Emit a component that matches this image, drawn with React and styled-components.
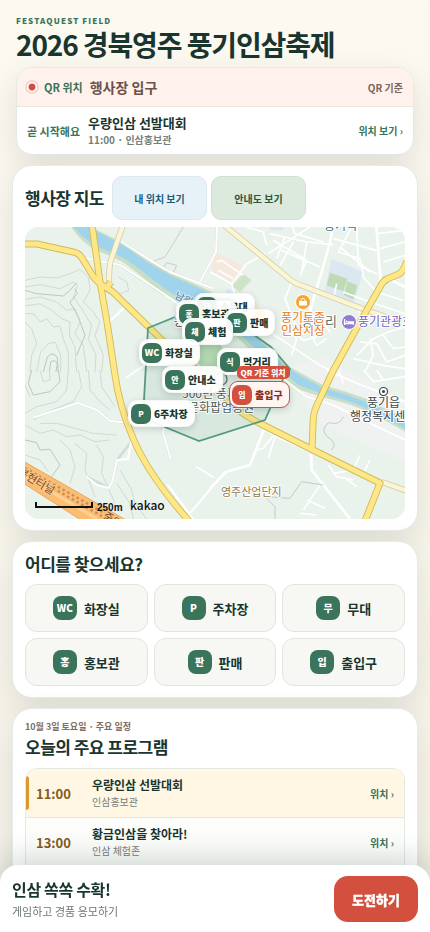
import React from "react";
import styled, { createGlobalStyle } from "styled-components";

const GlobalStyle = createGlobalStyle`
  * {
    box-sizing: border-box;
  }

  body {
    margin: 0;
    background: #fbf8ee;
    color: #18352f;
    font-family: "Noto Sans CJK KR", "Noto Sans", sans-serif;
  }

  button,
  a {
    font-family: inherit;
    color: inherit;
    text-decoration: none;
    cursor: pointer;
  }
`;

const Page = styled.div`
  min-height: 100vh;
  padding: 14px 12px 88px;
  background: linear-gradient(180deg, #fcf9f0 0%, #f6f2e8 100%);
`;

const Header = styled.header`
  padding: 0 4px;
`;

const Brand = styled.p`
  margin: 0;
  font-size: 8px;
  line-height: 14px;
  font-weight: 800;
  letter-spacing: 0.14em;
  color: #39745b;
`;

const Title = styled.h1`
  margin: 0;
  font-size: 28px;
  line-height: 33px;
  font-weight: 700;
  letter-spacing: -0.04em;
`;

const ContextCard = styled.section`
  margin: 6px 4px 10px;
  border: 1px solid #e4e9e4;
  border-radius: 16px;
  background: #fff;
  box-shadow: 0 12px 32px rgba(31, 52, 42, 0.12);
  overflow: hidden;
`;

const LocationRow = styled.div`
  display: flex;
  align-items: center;
  gap: 5px;
  height: 39px;
  padding: 0 10px 0 8px;
  background: #fff2ec;
  border-bottom: 1px solid #e8e8e3;
`;

const Dot = styled.span`
  width: 14px;
  height: 14px;
  border: 2px solid #f8d6ce;
  border-radius: 50%;
  background: radial-gradient(circle, #d3503e 3px, #fff 4px);
`;

const Tag = styled.span`
  font-size: 11px;
  font-weight: 700;
  color: #39745b;
  white-space: nowrap;
`;

const Place = styled.strong`
  flex: 1;
  margin-left: 2px;
  font-size: 14px;
  font-weight: 700;
  color: #6b5149;
`;

const Basis = styled.span`
  font-size: 10px;
  font-weight: 700;
  color: #7c655c;
`;

const NextRow = styled.div`
  display: flex;
  align-items: center;
  gap: 8px;
  height: 47px;
  padding: 0 10px;
`;

const EventText = styled.div`
  flex: 1;
  min-width: 0;
`;

const EventTitle = styled.strong`
  display: block;
  font-size: ${({ $size }) => $size || 12}px;
  line-height: 18px;
  font-weight: 700;
`;

const EventPlace = styled.span`
  display: block;
  font-size: 10px;
  line-height: 16px;
  font-weight: ${({ $bold }) => ($bold ? 700 : 400)};
  color: #76807b;
`;

const PlaceLink = styled.a`
  font-size: 10px;
  font-weight: 700;
  color: #39745b;
  white-space: nowrap;
`;

const Card = styled.section`
  margin-bottom: 10px;
  padding: 10px 12px 11px;
  border: 1px solid #e6eae8;
  border-radius: 20px;
  background: #fff;
  box-shadow: 0 12px 32px rgba(31, 52, 42, 0.12);
`;

const CardTitle = styled.h2`
  margin: 0;
  font-size: 17px;
  line-height: 24px;
  font-weight: 700;
  letter-spacing: -0.03em;
`;

const MapHead = styled.div`
  display: flex;
  align-items: center;
  gap: 4px;
  margin-bottom: 7px;

  ${CardTitle} {
    margin-right: 4px;
  }
`;

const MapButton = styled.button`
  width: 95px;
  height: 44px;
  padding: 0;
  border: 1px solid ${({ $blue }) => ($blue ? "#dce9ef" : "#d0e1d2")};
  border-radius: 10px;
  background: ${({ $blue }) => ($blue ? "#e7f2f8" : "#dceadd")};
  color: ${({ $blue }) => ($blue ? "#1e5c7a" : "#28573d")};
  font-size: 10px;
  font-weight: 700;
`;

const MapBox = styled.div`
  position: relative;
  aspect-ratio: 380 / 292;
  border-radius: 14px;
  background: #eaf2ec;
  overflow: hidden;
`;

const MapDrawing = styled.svg`
  display: block;
  width: 100%;
  height: 100%;
`;

const Pin = styled.button`
  position: absolute;
  display: flex;
  align-items: center;
  gap: 3px;
  height: 27px;
  padding: 0 6px 0 2px;
  border: 1px solid ${({ $active }) => ($active ? "#d3503e" : "#f4f7f5")};
  border-radius: 9px;
  background: ${({ $active }) => ($active ? "#fff5f1" : "rgba(255, 255, 255, 0.93)")};
  color: ${({ $active }) => ($active ? "#8b2e25" : "#18352f")};
  box-shadow: 0 2px 7px rgba(24, 53, 47, 0.2);
  font-size: 10px;
  font-weight: 900;
  white-space: nowrap;
`;

const PinMark = styled.span`
  display: grid;
  place-items: center;
  width: 20px;
  height: 20px;
  border-radius: 7px;
  background: ${({ $active }) => ($active ? "#d3503e" : "#39745b")};
  color: #fff;
  font-size: ${({ $wide }) => ($wide ? 9 : 8)}px;
  line-height: 12px;
  font-weight: 900;
`;

const PinBadge = styled.span`
  position: absolute;
  right: -1px;
  bottom: 28px;
  padding: 0 4px;
  border-radius: 5px;
  background: #d3503e;
  color: #fff;
  font-size: 8px;
  line-height: 13px;
  font-weight: 900;
`;

const FacilityGrid = styled.div`
  display: grid;
  grid-template-columns: repeat(3, 1fr);
  gap: 6px;
  margin-top: 8px;
`;

const FacilityButton = styled.button`
  display: flex;
  align-items: center;
  justify-content: center;
  gap: 7px;
  height: 48px;
  padding: 0;
  border: 1px solid #dfe6df;
  border-radius: 12px;
  background: #f7f8f4;
  font-size: 13px;
  font-weight: 700;
`;

const FacilityMark = styled.span`
  display: grid;
  place-items: center;
  width: 24px;
  height: 24px;
  border-radius: 8px;
  background: #39745b;
  color: #fff;
  font-size: 10px;
  line-height: 14px;
  font-weight: 900;
`;

const ProgramDate = styled.p`
  margin: 0;
  font-size: 9px;
  line-height: 16px;
  font-weight: 700;
  color: #806d62;
`;

const ProgramList = styled.ul`
  margin: 9px 0 0;
  padding: 0 0 12px;
  border: 1px solid #e2e8e2;
  border-radius: 12px;
  background: #fdfefb;
  list-style: none;
  overflow: hidden;
`;

const ProgramItem = styled.li`
  display: flex;
  align-items: center;
  height: 49px;
  padding-right: 10px;
  background: ${({ $now }) => ($now ? "#fff6e3" : "#fdfefb")};
  border-bottom: 1px solid #e2e8e2;

  &::before {
    content: "";
    width: 3px;
    height: 34px;
    margin-right: 7px;
    border-radius: 0 3px 3px 0;
    background: ${({ $now }) => ($now ? "#d99a2b" : "transparent")};
  }
`;

const Time = styled.time`
  width: 56px;
  font-size: 13px;
  font-weight: 700;
  color: #85591c;
`;

const BottomBar = styled.aside`
  position: fixed;
  left: 0;
  right: 0;
  bottom: 0;
  display: flex;
  align-items: center;
  justify-content: space-between;
  padding: 11px 12px 10px;
  border-radius: 18px 18px 0 0;
  background: #fff;
  box-shadow: 0 -8px 28px rgba(24, 53, 47, 0.18);
`;

const BarTitle = styled.strong`
  display: block;
  font-size: 16px;
  line-height: 24px;
  font-weight: 700;
  letter-spacing: -0.02em;
`;

const BarText = styled.span`
  display: block;
  font-size: 11px;
  line-height: 20px;
  color: #6d7773;
`;

const PlayButton = styled.button`
  width: 84px;
  height: 46px;
  border: 0;
  border-radius: 14px;
  background: #d3503e;
  && {
    color: #fff;
  }
  font-size: 13px;
  font-weight: 900;
  -webkit-text-stroke: 0.3px #fff;
`;

// x, y are positions on the 380 x 292 map
const pins = [
  { mark: "무", label: "소무대", x: 169, y: 66 },
  { mark: "홍", label: "홍보관", x: 151, y: 73 },
  { mark: "판", label: "판매", x: 199, y: 82 },
  { mark: "체", label: "체험", x: 157, y: 91 },
  { mark: "WC", label: "화장실", x: 114, y: 112 },
  { mark: "식", label: "먹거리", x: 192, y: 121 },
  { mark: "안", label: "안내소", x: 137, y: 139 },
  { mark: "입", label: "출입구", x: 204, y: 154, active: true },
  { mark: "P", label: "6주차장", x: 103, y: 173 },
];

const facilities = [
  { mark: "WC", label: "화장실" },
  { mark: "P", label: "주차장" },
  { mark: "무", label: "무대" },
  { mark: "홍", label: "홍보관" },
  { mark: "판", label: "판매" },
  { mark: "입", label: "출입구" },
];

const programs = [
  { time: "11:00", title: "우량인삼 선발대회", place: "인삼홍보관", now: true },
  { time: "13:00", title: "황금인삼을 찾아라!", place: "인삼 체험존" },
];

const MAIN_ROADS = [
  "M67 -2 L75 55 L82 95 L90 148 Q94 178 108 211 Q122 246 164 294",
  "M-2 17 L12 17 L48 25 Q54 26 57 31 L68 49 Q72 55 80 60 Q88 64 94 71 L142 118 L178 148 L212 182 Q222 190 238 198 L288 223 L355 256 L340 294",
  "M382 34 Q378 45 374 47 L362 52 Q358 54 355 60 L335 95 L308 144 L292 178 Q288 186 288 198 L287 222",
  "M83 59 L86 55",
];

const PALE_ROADS = [
  "M98 -2 L86 33 Q84 38 84 57",
  "M199 -2 L262 50 Q268 56 278 59 L338 82 L382 97",
  "M357 255 L382 264",
];

function FestivalMap() {
  return (
    <MapDrawing viewBox="0 0 380 292" preserveAspectRatio="xMidYMid slice" aria-hidden="true">
      <rect width="380" height="292" fill="#eaf2ec" />
      <path d="M258 143 L300 130 L380 175 V235 L300 200Z" fill="#f0f2f1" />

      {/* contour lines */}
      <g transform="translate(-5 -5) scale(.33333)" fill="none" stroke="#cfdad0" strokeWidth="3">
        <path d="M15 175 L60 165 L110 168 L150 155 L180 142 L205 165 L210 205 L190 240 L220 270 L240 300 L225 340 L250 400 L245 450" />
        <path d="M15 195 L60 188 L120 200 L160 180 L172 190 L160 225 L185 260 L215 310 L205 350 L228 400 L225 450" />
        <path d="M15 205 L50 215 L130 222 L150 205 L170 182" stroke="#b9c8bc" />
        <path d="M15 232 L60 225 L110 240 L140 265 L165 260 L180 300 L165 335 L190 370 L200 450" />
        <path d="M15 252 L60 245 L95 265 L125 290 L150 300 L148 340 L165 375 L170 450" />
        <path d="M15 275 L40 275 L62 300 L80 290 L100 315 L120 312 L130 350 L145 390 L145 450" />
        <path d="M15 300 L35 320 L50 365 L35 400 L30 450 M50 450 L62 390 L85 365 L105 360 L122 400 L122 450" />
        <path d="M70 450 L82 405 Q100 385 112 408 L115 450 M88 450 L92 420 Q104 410 112 425 L108 450" stroke="#b9c8bc" />
        <path d="M165 200 L172 215 L150 240 L175 285 L195 340 L170 400" stroke="#b9c8bc" />
        <path d="M490 15 L460 65 L435 105 L400 118 M425 145 L440 122 L470 130 L460 152 L425 145" stroke="#c9cfcc" />
        <path d="M295 165 L320 180 L326 205 L290 220" />
      </g>
      <g transform="translate(-5 143) scale(.33333)" fill="none" stroke="#cfdad0" strokeWidth="3">
        <path d="M35 0 L25 40 L40 75 L90 65 L120 35 L115 0" stroke="#b9c8bc" />
        <path d="M60 0 L70 35 L90 30 L88 0 M145 0 L140 60 L110 95 L50 110 L15 130" />
        <path d="M175 0 L185 50 L160 95 L100 118 L40 150 M205 0 L210 60 L240 95 L270 120" />
        <path d="M15 165 L60 190 L100 180 L140 200 L180 195 L225 215 L270 210" />
        <path d="M15 210 L50 218 L60 240 L90 238 L120 285 L95 320" stroke="#b9c8bc" />
        <path d="M60 160 L110 160 L165 175 L220 190 L290 195 M15 255 L60 270 L85 305" />
        <path d="M120 210 L150 240 L165 290 L150 340 M165 220 L200 250 L195 300 L225 380" />
        <path d="M230 225 L250 260 L245 310 L285 400 M300 300 L335 360 L345 400 L380 447" />
        <path d="M240 0 L245 50 L285 110 M15 45 L30 80 M290 340 L330 400 L340 447" />
      </g>

      {/* river */}
      <path d="M45 -2 Q58 19 78 26 Q96 32 111 45 Q138 68 160 80 Q198 94 222 120 Q245 139 272 162 Q296 170 316 175 Q340 181 382 206 L382 192 Q352 178 342 172 Q320 164 298 158 Q275 146 258 136 L230 106 Q204 73 179 61 L145 46 L122 33 L105 21 L94 14 L62 -2Z" fill="#c9dfc5" />
      <path d="M47 -2 Q61 16 80 23 Q98 29 113 41 Q140 63 162 76 Q198 90 225 117 Q248 136 273 158 Q296 167 316 172 Q340 178 382 203 L382 194 Q352 181 342 175 Q320 167 298 161 Q275 149 257 137 L229 107 Q203 75 178 63 L145 48 L122 35 L105 23 L94 16 L62 -1Z" fill="#a0d4ec" />
      <path d="M160 117 L190 110 L202 128 L196 150 L180 146Z" fill="#bedfb9" />

      {/* blocks */}
      <g transform="translate(185 -5) scale(.33333)">
        <path d="M15 90 L100 130 L65 185 L5 145Z" fill="#f4e9dc" />
        <path d="M100 155 L125 175 L90 210 L65 192Z" fill="#cfe3c8" />
        <path d="M50 200 L88 215 L70 245 L45 235Z M365 110 L460 150 L430 250 L345 205Z M180 0 H220 V25 H180Z" fill="#dbe8f1" />
        <path d="M360 152 L412 170 L400 208 L350 190Z M412 178 L442 190 L430 232 L402 220Z" fill="#bedbb4" />
      </g>

      {/* side streets */}
      <g fill="none" stroke="#d4dad6" strokeWidth="2.6" strokeLinejoin="round">
        <path d="M94 13 Q124 33 145 45 L187 61 M60 31 L95 38 L140 68 M175 55 L191 25 L192 0" />
        <path d="M10 190 L53 176 L72 183 L85 194 L106 196 M106 215 L92 233 L87 255 L84 261 L62 250 M134 180 L138 205 L145 230" />
      </g>
      <g fill="none" stroke="#fff" strokeWidth="2" strokeLinejoin="round" strokeLinecap="round">
        <path d="M94 13 Q124 33 145 45 L187 61 M60 31 L95 38 L112 49 L160 81 M175 55 L191 25 L192 0 M84 95 L98 82" />
        <path d="M10 190 L53 176 L72 183 L85 194 L106 196 M106 215 L103 232 L92 233 L87 255 L84 261 L72 258 L62 250 M134 180 L139 195 L138 205 L145 230 M102 150 L120 138" />
        <path d="M112 220 L130 255 L153 280 L163 292 M143 258 L168 292 M172 240 L188 250 M160 292 L200 245" />
      </g>
      <g transform="translate(185 -5) scale(.33333)" fill="none" stroke="#fff" strokeWidth="5" strokeLinejoin="round">
        <path d="M372 0 L360 60 L338 140 L315 215 L285 320 M498 0 L512 178 M585 195 L535 170" strokeWidth="8" />
        <path d="M245 180 L225 230 L260 320 M440 0 L445 130 L500 155" />
        <path d="M180 35 L290 60 L370 68 M175 95 L260 40 L300 15 M190 55 L290 115 L270 160 M210 130 L250 60 M225 45 L200 110 M290 60 L275 150 M215 85 L330 135" />
        <path d="M0 150 L65 185 L110 125 L165 95 M65 185 L80 240 L130 300 M20 120 L35 115 L100 160 M25 145 L70 170 M110 15 L160 30 L170 70 M240 0 L255 35 L340 60" />
        <path d="M370 50 L500 85 M390 75 L480 150 M425 15 L385 90 L450 110 L460 160 M510 80 L585 60 M500 35 L585 25 M520 120 L585 100" />
        <path d="M400 210 L480 240 L585 275 M380 185 L370 230 M430 240 L460 290 M455 160 L500 210 L580 235" />
        <path d="M130 300 L210 350 L330 430 L370 450 M245 330 L260 350 L245 400 M300 330 L320 370 L350 350 M330 285 L360 330 M210 300 L280 355 L320 345" />
        <path d="M585 315 L535 330 L490 350 L440 400 M450 360 L500 365 L530 420 L585 400 M480 350 L490 400 L465 450 M520 340 L550 380 L585 375 M430 410 L520 430 L585 440" />
      </g>
      <g transform="translate(185 143) scale(.33333)" fill="none" stroke="#fff" strokeWidth="5" strokeLinejoin="round">
        <path d="M220 25 L290 80 L370 105 L480 160 L585 210 M350 0 L440 40 L585 95 M385 0 L400 40 M460 0 L490 35 L585 20 M500 0 L520 30" />
        <path d="M165 170 L120 285 L50 305 L0 355 M303 250 L305 300 L360 370 L420 447" strokeWidth="8" />
        <path d="M195 190 L160 235 L140 240 M195 200 L175 265 M160 175 L200 200 L300 245" />
        <path d="M355 285 L380 320 L430 330 M450 255 L430 300 L370 310 M480 270 L460 310 M400 320 L440 350 M330 345 L280 420 M290 390 L345 415 M270 430 L320 435" />
      </g>
      <g transform="translate(185 143) scale(.33333)" fill="none" stroke="#c3cbc6" strokeWidth="3">
        <path d="M365 240 Q385 220 352 200 Q330 180 355 158 Q390 168 400 140 M170 380 L240 385 L275 335 L340 345 M170 385 L195 410 L195 447" />
      </g>

      {/* expressway */}
      <path d="M-2 234 L101 293 L56 293 L-2 256Z" fill="#fbbd72" stroke="#e8a85e" />
      <g fill="none" stroke="#c98d55" strokeWidth="2.4" strokeDasharray="2.4 3">
        <path d="M0 241 L88 291" />
        <path d="M0 245 L80 291" />
      </g>
      <path d="M0 249 L72 292" fill="none" stroke="#ffd093" strokeWidth="3" />

      {/* main roads */}
      <g fill="none" strokeLinejoin="round">
        {PALE_ROADS.map((d) => (
          <path key={d} d={d} stroke="#d3cdab" strokeWidth="6" />
        ))}
        {PALE_ROADS.map((d) => (
          <path key={d} d={d} stroke="#fbf5d3" strokeWidth="4.4" />
        ))}
        {MAIN_ROADS.map((d) => (
          <path key={d} d={d} stroke="#cfbb58" strokeWidth="7" />
        ))}
        {MAIN_ROADS.map((d) => (
          <path key={d} d={d} stroke="#ffe788" strokeWidth="5.2" />
        ))}
      </g>

      {/* festival area */}
      <path
        d="M123 101 L170 82 L215 98 L246 120 L265 142 L258 152 L240 193 L174 214 L118 191Z"
        fill="rgba(57, 135, 105, .09)"
        stroke="#539b80"
        strokeWidth="1.8"
      />

      <g
        fontFamily="'Noto Sans CJK KR', sans-serif"
        fontSize="12"
        paintOrder="stroke"
        stroke="#fff"
        strokeWidth="2"
        strokeLinejoin="round"
      >
        <text x="299" y="3" fill="#45707f">풍기역</text>
        <text x="276" y="99" fontSize="13" fill="#606a6c">성내리</text>
        <text x="256" y="95" fill="#e27c18">풍기토종</text>
        <text x="256" y="108" fill="#e27c18">인삼시장</text>
        <text x="333" y="99" fill="#7360bd">풍기관광호텔</text>
        <text x="342" y="180" fill="#3d4448">풍기읍</text>
        <text x="325" y="194" fill="#3d4448">행정복지센터</text>
        <text x="157" y="171" fill="#4e5a56">500년 풍기인삼</text>
        <text x="163" y="185" fill="#4e5a56">문화팝업공원</text>
        <text x="196" y="269" fontSize="11" fill="#967842">영주산업단지</text>
        <text x="149" y="71" fontSize="10" fill="#4a7d99" stroke="#d5ecf5" transform="rotate(25 149 71)">남원천</text>
        <text x="149" y="99" fontSize="11" fill="#5b3c36">동부</text>
        <text x="-8" y="247" fontSize="11" fill="#7d4a22" stroke="#f8c88c" transform="rotate(31 -8 247)">봉현터널</text>
        <text x="77" y="291" fontSize="11" fill="#7d4a22" stroke="#f8c88c" transform="rotate(31 77 291)">중앙</text>
      </g>

      {/* places */}
      <circle cx="278" cy="75" r="7.5" fill="#f7a531" stroke="#fff" />
      <path d="M274 74 H282 V78.5 H274Z" fill="#fff" />
      <path d="M276 74 V72.5 Q278 70 280 72.5 V74" fill="none" stroke="#fff" />
      <circle cx="234" cy="88" r="7" fill="#f7a531" stroke="#fff" />
      <circle cx="324" cy="95" r="7.5" fill="#8f7fd0" stroke="#fff" />
      <path d="M319.5 92 V98 M319.5 96.5 H328.5 M328.5 98 V95 H323" fill="none" stroke="#fff" strokeWidth="1.3" />
      <circle cx="321.7" cy="94.5" r="1" fill="#fff" />
      <circle cx="358.5" cy="164.5" r="4" fill="#fff" stroke="#3d4448" strokeWidth="1.2" />
      <circle cx="358.5" cy="164.5" r="1.5" fill="#3d4448" />
      <circle cx="196" cy="152" r="6" fill="none" stroke="#6a7f75" strokeWidth="1.5" />

      {/* scale */}
      <path d="M11 275 V280 H67 V275" fill="none" stroke="#111" strokeWidth="2" />
      <text x="72" y="284" fontFamily="'Liberation Sans', sans-serif" fontSize="10" fontWeight="700" fill="#111">
        250m
      </text>
      <text x="105" y="283" fontFamily="'Noto Sans CJK KR', sans-serif" fontSize="12" fontWeight="500" fill="#111">
        kakao
      </text>
    </MapDrawing>
  );
}

function App() {
  return (
    <>
      <GlobalStyle />
      <Page>
        <Header>
          <Brand>FESTAQUEST FIELD</Brand>
          <Title>2026 경북영주 풍기인삼축제</Title>
        </Header>

        <ContextCard>
          <LocationRow>
            <Dot />
            <Tag>QR 위치</Tag>
            <Place>행사장 입구</Place>
            <Basis>QR 기준</Basis>
          </LocationRow>
          <NextRow>
            <Tag>곧 시작해요</Tag>
            <EventText>
              <EventTitle $size={13}>우량인삼 선발대회</EventTitle>
              <EventPlace $bold>11:00 · 인삼홍보관</EventPlace>
            </EventText>
            <PlaceLink href="#map">위치 보기 ›</PlaceLink>
          </NextRow>
        </ContextCard>

        <Card id="map">
          <MapHead>
            <CardTitle>행사장 지도</CardTitle>
            <MapButton $blue>내 위치 보기</MapButton>
            <MapButton>안내도 보기</MapButton>
          </MapHead>
          <MapBox>
            <FestivalMap />
            {pins.map((pin) => (
              <Pin
                key={pin.label}
                $active={pin.active}
                style={{ left: `${(pin.x / 380) * 100}%`, top: `${(pin.y / 292) * 100}%` }}
              >
                <PinMark $active={pin.active} $wide={pin.mark === "WC"}>
                  {pin.mark}
                </PinMark>
                {pin.label}
                {pin.active && <PinBadge>QR 기준 위치</PinBadge>}
              </Pin>
            ))}
          </MapBox>
        </Card>

        <Card>
          <CardTitle>어디를 찾으세요?</CardTitle>
          <FacilityGrid>
            {facilities.map((item) => (
              <FacilityButton key={item.label}>
                <FacilityMark>{item.mark}</FacilityMark>
                {item.label}
              </FacilityButton>
            ))}
          </FacilityGrid>
        </Card>

        <Card>
          <ProgramDate>10월 3일 토요일 · 주요 일정</ProgramDate>
          <CardTitle>오늘의 주요 프로그램</CardTitle>
          <ProgramList>
            {programs.map((item) => (
              <ProgramItem key={item.time} $now={item.now}>
                <Time>{item.time}</Time>
                <EventText>
                  <EventTitle>{item.title}</EventTitle>
                  <EventPlace>{item.place}</EventPlace>
                </EventText>
                <PlaceLink href="#map">위치 ›</PlaceLink>
              </ProgramItem>
            ))}
          </ProgramList>
        </Card>
      </Page>

      <BottomBar>
        <div>
          <BarTitle>인삼 쏙쏙 수확!</BarTitle>
          <BarText>게임하고 경품 응모하기</BarText>
        </div>
        <PlayButton>도전하기</PlayButton>
      </BottomBar>
    </>
  );
}

export default App;
